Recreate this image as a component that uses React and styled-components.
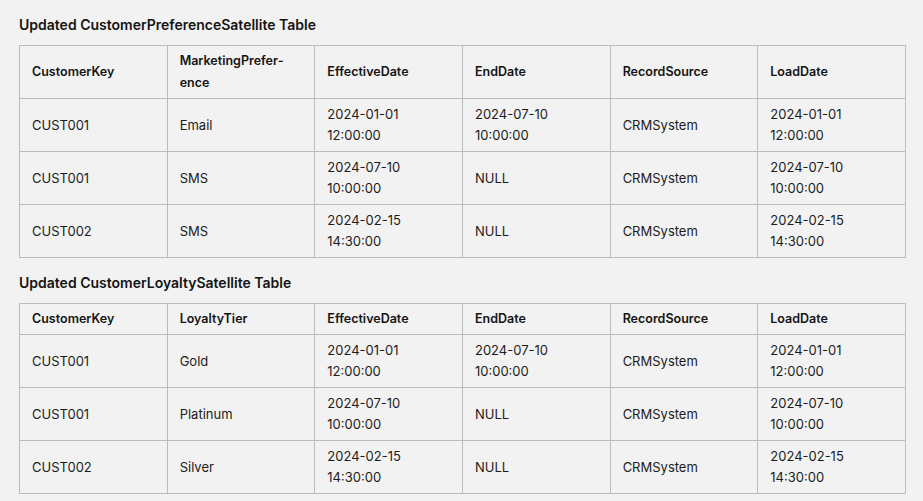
import React from "react";
import styled, { createGlobalStyle } from "styled-components";

const Global = createGlobalStyle`
  html, body { margin: 0; padding: 0; background: #f2f2f2; }
  body { font-family: Inter, "Noto Sans", sans-serif; color: #1c1c1c; }
`;

const Page = styled.div`
  padding: 14px 17px 0 19px;
  display: flex;
  flex-direction: column;
`;

const Title = styled.h3`
  margin: 0 0 9px 0;
  font-size: 14px;
  font-weight: 600;
  line-height: 22px;
  color: #141414;
`;

const Table = styled.table`
  width: 887px;
  border-collapse: collapse;
  table-layout: fixed;
  border: 1px solid #8c8c8c;
  margin-bottom: ${(p) => (p.$last ? "0" : "14px")};
`;

const Th = styled.th`
  text-align: left;
  font-size: 12.5px;
  font-weight: 600;
  line-height: 22px;
  padding: 4px 12px;
  border: 1px solid #bcbcbc;
  color: #141414;
`;

const Td = styled.td`
  font-size: 13px;
  font-weight: 400;
  line-height: 21px;
  padding: 5px 12px;
  border: 1px solid #bcbcbc;
  color: #1c1c1c;
`;

const rows1 = [
  ["CUST001", "Email", "2024-01-01 12:00:00", "2024-07-10 10:00:00", "CRMSystem", "2024-01-01 12:00:00"],
  ["CUST001", "SMS", "2024-07-10 10:00:00", "NULL", "CRMSystem", "2024-07-10 10:00:00"],
  ["CUST002", "SMS", "2024-02-15 14:30:00", "NULL", "CRMSystem", "2024-02-15 14:30:00"],
];
const rows2 = [
  ["CUST001", "Gold", "2024-01-01 12:00:00", "2024-07-10 10:00:00", "CRMSystem", "2024-01-01 12:00:00"],
  ["CUST001", "Platinum", "2024-07-10 10:00:00", "NULL", "CRMSystem", "2024-07-10 10:00:00"],
  ["CUST002", "Silver", "2024-02-15 14:30:00", "NULL", "CRMSystem", "2024-02-15 14:30:00"],
];

function DataTable({ headers, rows, last }) {
  return (
    <Table $last={last}>
      <thead>
        <tr>
          {headers.map((h, i) => (
            <Th key={i}>{h}</Th>
          ))}
        </tr>
      </thead>
      <tbody>
        {rows.map((r, i) => (
          <tr key={i}>
            {r.map((c, j) => (
              <Td key={j}>{c}</Td>
            ))}
          </tr>
        ))}
      </tbody>
    </Table>
  );
}

export default function App() {
  return (
    <>
      <Global />
      <Page>
        <Title>Updated CustomerPreferenceSatellite Table</Title>
        <DataTable
          headers={["CustomerKey", "MarketingPrefer\u00ADence", "EffectiveDate", "EndDate", "RecordSource", "LoadDate"]}
          rows={rows1}
        />
        <Title>Updated CustomerLoyaltySatellite Table</Title>
        <DataTable
          headers={["CustomerKey", "LoyaltyTier", "EffectiveDate", "EndDate", "RecordSource", "LoadDate"]}
          rows={rows2}
          last
        />
      </Page>
    </>
  );
}
